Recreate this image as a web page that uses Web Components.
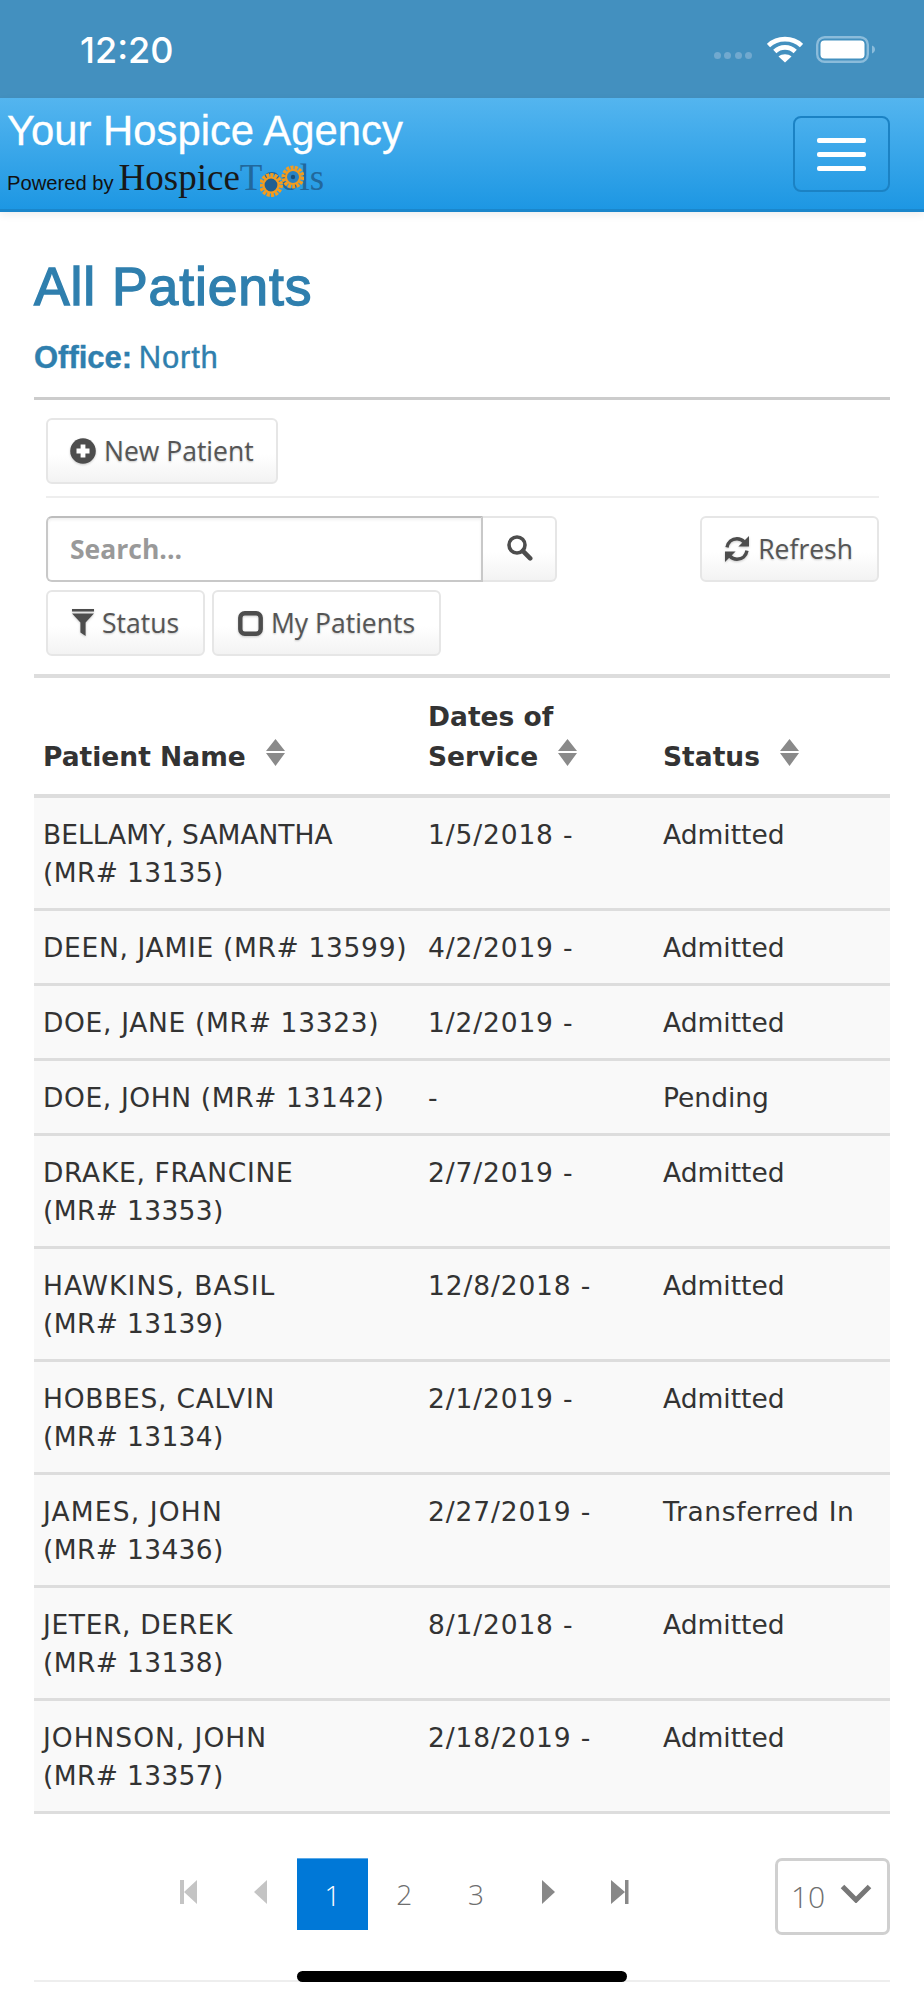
<!DOCTYPE html>
<html>
<head>
<meta charset="utf-8">
<title>All Patients</title>
<style>
  html, body { margin: 0; padding: 0; background: #fff; }
  body { width: 924px; height: 2000px; overflow: hidden; position: relative; font-family: "Liberation Sans", Arial, sans-serif; }
</style>
</head>
<body>
<status-bar></status-bar>
<app-navbar></app-navbar>
<patients-page></patients-page>
<home-indicator></home-indicator>

<script>
const ICONS = {
  plus: `<svg width="26" height="26" viewBox="0 0 26 26"><circle cx="13" cy="13" r="12.8" fill="#4d4d4d"/><path d="M10.6 6.5h4.8v4.1h4.1v4.8h-4.1v4.1h-4.8v-4.1H6.5v-4.8h4.1z" fill="#fff"/></svg>`,
  search: `<svg width="27" height="27" viewBox="0 0 27 27"><circle cx="11" cy="11" r="8" fill="none" stroke="#4d4d4d" stroke-width="3.6"/><path d="M16.8 16.8l7.4 7.6" stroke="#4d4d4d" stroke-width="4.6" stroke-linecap="round"/></svg>`,
  refresh: `<svg width="26" height="28" viewBox="0 0 26 28"><path d="M3 12.4C3.9 7.2 8 3.8 13 3.8c3 0 5.4 1.2 7.2 3.2" fill="none" stroke="#4d4d4d" stroke-width="3.4"/><path d="M25 1v10.6H14.400z" fill="#4d4d4d"/><path d="M23 15.600C22.100 20.800 18 24.200 13 24.200c-3 0-5.400-1.200-7.200-3.200" fill="none" stroke="#4d4d4d" stroke-width="3.4"/><path d="M1 27V16.400h10.600z" fill="#4d4d4d"/></svg>`,
  filter: `<svg width="22" height="28" viewBox="0 0 22 28"><path d="M0 0h22v2.600H0zM0 4.400h22L13.600 13.500V27l-5.200-3.600V13.500z" fill="#4d4d4d"/></svg>`,
  square: `<svg width="25" height="25" viewBox="0 0 25 25"><rect x="2.300" y="2.300" width="20.400" height="20.400" rx="4.500" fill="none" stroke="#4d4d4d" stroke-width="4.400"/></svg>`
};

customElements.define("status-bar", class extends HTMLElement {
  constructor() {
    super();
    this.attachShadow({ mode: "open" }).innerHTML = `
      <style>
        :host { display: flex; align-items: center; height: 98px; background: #4390bf; color: #fff; box-sizing: border-box; padding: 2px 48px 0 80px; }
        .time { font: 500 36px/1 Inter, "Liberation Sans", sans-serif; }
        .right { margin-left: auto; display: flex; align-items: center; margin-top: -2px; }
        .dots { display: flex; gap: 3.400px; margin: 12px 15px 0 0; }
        .dots i { width: 7px; height: 7px; border-radius: 50%; background: #71a9cf; }
        svg { display: block; }
      </style>
      <span class="time">12:20</span>
      <div class="right">
        <div class="dots"><i></i><i></i><i></i><i></i></div>
        <svg width="36" height="27" viewBox="0 0 36 27" style="margin-right:13px">
          <path d="M1.500 9.500C10.500 1 25.500 1 34.500 9.500" fill="none" stroke="#fff" stroke-width="4.600"/>
          <path d="M7.800 15.500C13.500 10 22.500 10 28.200 15.500" fill="none" stroke="#fff" stroke-width="4.600"/>
          <path d="M18 26.500L11.500 20.500C15 17.600 21 17.600 24.500 20.500z" fill="#fff"/>
        </svg>
        <svg width="60" height="27" viewBox="0 0 60 27">
          <rect x="1.200" y="1.200" width="50.600" height="24.600" rx="7.500" fill="none" stroke="#8bbcdb" stroke-width="2.400"/>
          <rect x="4.500" y="4.500" width="44" height="18" rx="4" fill="#fff"/>
          <path d="M56 9.500c2 .8 3 2.200 3 4s-1 3.200-3 4z" fill="#8bbcdb"/>
        </svg>
      </div>`;
  }
});

customElements.define("app-navbar", class extends HTMLElement {
  constructor() {
    super();
    this.attachShadow({ mode: "open" }).innerHTML = `
      <style>
        :host { display: flex; justify-content: space-between; height: 114px; box-sizing: border-box; padding: 0 34px 0 7px;
          background: linear-gradient(#54b5ef, #1d97e3); border-bottom: 3px solid #1a86cb; box-shadow: 0 3px 8px rgba(0,0,0,.07); position: relative; }
        .agency { font: 400 41.800px/46px "Liberation Sans", Arial, sans-serif; -webkit-text-stroke: .3px #fff; color: #fff; margin-top: 10px; white-space: nowrap; }
        .powered { display: flex; align-items: baseline; margin-top: 2px; height: 44px; }
        .by { font: 400 20.200px/1 "Liberation Sans", Arial, sans-serif; color: #111; margin-right: 5px; }
        .logo { font: 400 37px/44px "Liberation Serif", "Times New Roman", serif; color: #181818; white-space: nowrap; }
        .logo b { font-weight: 400; color: #21689c; }
        .oo { position: relative; display: inline-block; }
        .oo svg { position: absolute; left: -2px; top: 0; }
        button { all: unset; box-sizing: border-box; width: 97px; height: 76px; margin-top: 18px; border: 2px solid #1b82c4; border-radius: 8px; display: flex; flex-direction: column; justify-content: center; align-items: center; gap: 9px; }
        button i { display: block; width: 49px; height: 5px; border-radius: 2px; background: #fff; }
      </style>
      <div>
        <div class="agency">Your Hospice Agency</div>
        <div class="powered">
          <span class="by">Powered by</span>
          <span class="logo">Hospice<b>T<span class="oo">oo<svg width="44" height="44" viewBox="0 0 44 44">
            <g fill="none">
              <circle cx="11" cy="29" r="10" stroke="#f39c1f" stroke-width="4" stroke-dasharray="3 1.200"/>
              <circle cx="11" cy="29" r="7.500" fill="#1f5f92" stroke="#f39c1f" stroke-width="2.200"/>
              <circle cx="33" cy="21" r="9.500" stroke="#f39c1f" stroke-width="4" stroke-dasharray="3 1.200"/>
              <circle cx="33" cy="21" r="7" fill="#2a83c4" stroke="#f39c1f" stroke-width="2"/>
              <circle cx="33" cy="21" r="2.200" fill="#174f7c"/>
            </g></svg></span>ls</b></span>
        </div>
      </div>
      <button aria-label="Menu"><i></i><i></i><i></i></button>`;
  }
});

customElements.define("tool-button", class extends HTMLElement {
  constructor() {
    super();
    const icon = this.getAttribute("icon");
    this.attachShadow({ mode: "open" }).innerHTML = `
      <style>
        :host { display: inline-flex; align-items: center; box-sizing: border-box; height: 66px; padding: 0 24px; gap: 8px;
          border: 2px solid #e6e6e6; border-radius: 6px; background: linear-gradient(#fff 55%, #f3f3f3);
          font: 400 26.500px/1 "Open Sans", sans-serif; color: #555; text-shadow: 0 1px 2px rgba(0,0,0,.22); white-space: nowrap; }
        svg { display: block; filter: drop-shadow(0 1px 1px rgba(0,0,0,.2)); }
      </style>
      ${ICONS[icon] || ""}<slot></slot>`;
  }
});

customElements.define("search-box", class extends HTMLElement {
  constructor() {
    super();
    this.attachShadow({ mode: "open" }).innerHTML = `
      <style>
        :host { display: flex; height: 66px; width: 511px; box-sizing: border-box; }
        .field { width: 437px; box-sizing: border-box; display: flex; align-items: center; padding-left: 22px;
          border: 2.500px solid #c8c8c8; border-top-color: #bdbdbd; border-radius: 6px 0 0 6px;
          box-shadow: inset 0 2px 3px rgba(0,0,0,.06);
          font: 700 26.500px/1 "Open Sans", sans-serif; color: #999; }
        .go { flex: 1; display: flex; align-items: center; justify-content: center; border: 2px solid #e6e6e6; border-left: 0; border-radius: 0 6px 6px 0;
          background: linear-gradient(#fff 55%, #f3f3f3); padding-bottom: 4px; }
      </style>
      <div class="field">Search...</div>
      <div class="go">${ICONS.search}</div>`;
  }
});

customElements.define("patient-toolbar", class extends HTMLElement {
  constructor() {
    super();
    this.attachShadow({ mode: "open" }).innerHTML = `
      <style>
        :host { display: block; padding: 18px 11px 18px 12px; }
        .sep { height: 2px; background: #eee; margin: 12px 0 18px; }
        .row { display: flex; }
        .row.tight { gap: 7px; margin-top: 8px; }
        .push { margin-left: auto; }
      </style>
      <div class="row"><tool-button icon="plus" style="padding:0 22px">New Patient</tool-button></div>
      <div class="sep"></div>
      <div class="row"><search-box></search-box><tool-button class="push" icon="refresh" style="padding-left:22px">Refresh</tool-button></div>
      <div class="row tight"><tool-button icon="filter">Status</tool-button><tool-button icon="square">My Patients</tool-button></div>`;
  }
});

// name line, its letter spacing (DejaVu runs narrower than the Verdana in the shot on I and J), then MR# on a second line or not
const PATIENTS = [
  ["BELLAMY, SAMANTHA", 0, "(MR# 13135)", "1/5/2018 -", "Admitted"],
  ["DEEN, JAMIE (MR# 13599)", .67, "", "4/2/2019 -", "Admitted"],
  ["DOE, JANE (MR# 13323)", .67, "", "1/2/2019 -", "Admitted"],
  ["DOE, JOHN (MR# 13142)", .61, "", "-", "Pending"],
  ["DRAKE, FRANCINE", .68, "(MR# 13353)", "2/7/2019 -", "Admitted"],
  ["HAWKINS, BASIL", 1.09, "(MR# 13139)", "12/8/2018 -", "Admitted"],
  ["HOBBES, CALVIN", .73, "(MR# 13134)", "2/1/2019 -", "Admitted"],
  ["JAMES, JOHN", 1.16, "(MR# 13436)", "2/27/2019 -", "Transferred In"],
  ["JETER, DEREK", .64, "(MR# 13138)", "8/1/2018 -", "Admitted"],
  ["JOHNSON, JOHN", .98, "(MR# 13357)", "2/18/2019 -", "Admitted"]
];

const SORT = `<svg class="sort" width="19" height="27" viewBox="0 0 19 27"><path d="M9.500 0L19 12H0zM0 14h19L9.500 27z" fill="#8a8a8a"/></svg>`;

customElements.define("patient-table", class extends HTMLElement {
  constructor() {
    super();
    const rows = PATIENTS.map(p => `<tr>
      <td><span style="letter-spacing:${p[1]}px">${p[0]}</span>${p[2] ? `<br><span class="mr">${p[2]}</span>` : ""}</td>
      <td class="date">${p[3]}</td>
      <td${p[4].length > 8 ? ' class="wide"' : ""}>${p[4]}</td></tr>`).join("");
    this.attachShadow({ mode: "open" }).innerHTML = `
      <style>
        :host { display: block; }
        table { width: 856px; border-collapse: separate; border-spacing: 0; table-layout: fixed; border-top: 4px solid #ddd;
          font: 400 26.500px/38px "DejaVu Sans", Verdana, sans-serif; color: #333; }
        th { text-align: left; vertical-align: bottom; font-weight: 700; padding: 19px 9px 17px; border-bottom: 4px solid #ddd; line-height: 40px; }
        td { padding: 18px 9px 16px; vertical-align: top; background: #f9f9f9; border-bottom: 3px solid #ddd; white-space: nowrap; }
        .mr { letter-spacing: .35px; }
        .date { letter-spacing: .85px; }
        .wide { letter-spacing: .64px; }
        .sort { margin-left: 11px; vertical-align: 0; }
      </style>
      <table>
        <colgroup><col style="width:385px"><col style="width:235px"><col></colgroup>
        <thead><tr><th>Patient Name ${SORT}</th><th>Dates of Service ${SORT}</th><th>Status ${SORT}</th></tr></thead>
        <tbody>${rows}</tbody>
      </table>`;
  }
});

customElements.define("table-pager", class extends HTMLElement {
  constructor() {
    super();
    const arrow = (d, c) => `<span class="cell"><svg width="22" height="26" viewBox="0 0 22 26"><path d="${d}" fill="${c}"/></svg></span>`;
    this.attachShadow({ mode: "open" }).innerHTML = `
      <style>
        :host { display: flex; align-items: flex-start; padding: 44px 0 0 119px; border-bottom: 2px solid #eee; height: 122px; box-sizing: content-box;
          font: 300 28px/1 "Open Sans", sans-serif; color: #6e6e6e; }
        .pages { display: flex; }
        .cell { width: 71.800px; height: 72px; display: flex; align-items: center; justify-content: center; }
        .cell svg { margin-top: -4px; }
        .on { background: #0078d7; color: #fff; border-top: 1px solid #5aa9e8; box-sizing: border-box; }
        .size { margin-left: auto; width: 115px; height: 77px; box-sizing: border-box; border: 3px solid #d0d0d0; border-radius: 7px; display: flex; align-items: center; padding-left: 13px; font-size: 30px; }
        .size svg { margin-left: 15px; margin-top: -6px; }
      </style>
      <div class="pages">
        ${arrow("M2 1h4v24H2zM6 13L19 1v24z", "#c4c4c4")}
        ${arrow("M4 13L17 1v24z", "#c4c4c4")}
        <span class="cell on">1</span>
        <span class="cell">2</span>
        <span class="cell">3</span>
        ${arrow("M5 1l13 12L5 25z", "#888")}
        ${arrow("M2 1l14 12L2 25zM16 1h3.500v24H16z", "#888")}
      </div>
      <div class="size">10<svg width="32" height="19" viewBox="0 0 32 19"><path d="M2.500 2.500L16 16 29.500 2.500" fill="none" stroke="#777" stroke-width="5"/></svg></div>`;
  }
});

customElements.define("patients-page", class extends HTMLElement {
  constructor() {
    super();
    this.attachShadow({ mode: "open" }).innerHTML = `
      <style>
        :host { display: block; padding: 0 34px; }
        h1 { margin: 0; padding-top: 45px; font: 400 53.500px/60px "Liberation Sans", Arial, sans-serif; letter-spacing: .9px; -webkit-text-stroke: 1.400px #2f7fae; color: #2f7fae; }
        .office { font: 400 31px/36px "Liberation Sans", Arial, sans-serif; -webkit-text-stroke: .4px #2f7fae; color: #2f7fae; margin-top: 23px; padding-bottom: 21px; border-bottom: 3px solid #ccc; word-spacing: -2px; }
        .office span { letter-spacing: .8px; }
      </style>
      <h1>All Patients</h1>
      <div class="office"><b>Office:</b> <span>North</span></div>
      <patient-toolbar></patient-toolbar>
      <patient-table></patient-table>
      <table-pager></table-pager>`;
  }
});

customElements.define("home-indicator", class extends HTMLElement {
  constructor() {
    super();
    this.attachShadow({ mode: "open" }).innerHTML = `
      <style>
        :host { position: absolute; left: 297px; top: 1971px; width: 330px; height: 11px; border-radius: 6px; background: #000; }
      </style>`;
  }
});
</script>
</body>
</html>
